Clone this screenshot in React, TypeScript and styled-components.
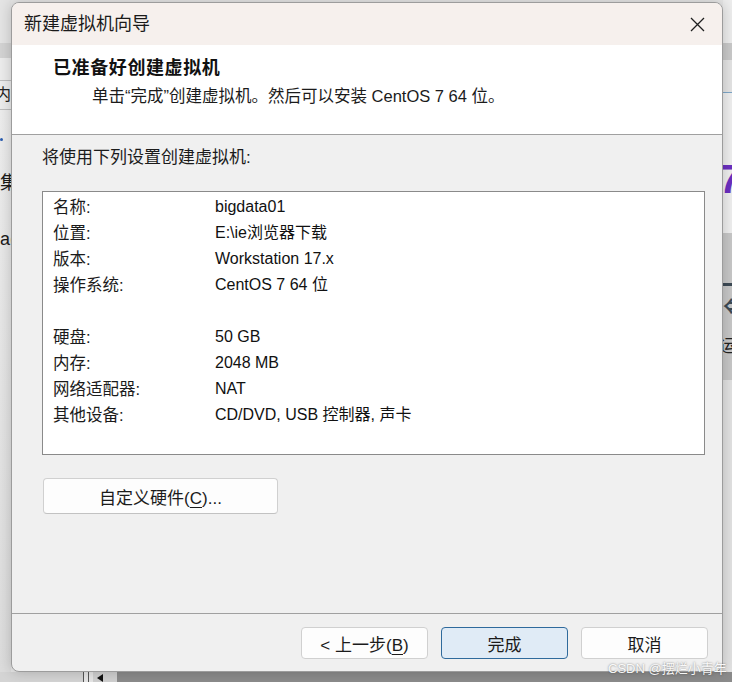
import React from "react";
import styled, { createGlobalStyle } from "styled-components";

const GlobalStyle = createGlobalStyle`
  html, body {
    margin: 0;
    padding: 0;
  }
  body {
    font-family: "Liberation Sans", "Noto Sans CJK SC", sans-serif;
    color: #1b1b1b;
    background: #e6e6e6;
  }
`;

interface SettingRow {
  label: string;
  value: string;
}

const settingsTop: SettingRow[] = [
  { label: "名称:", value: "bigdata01" },
  { label: "位置:", value: "E:\\ie浏览器下载" },
  { label: "版本:", value: "Workstation 17.x" },
  { label: "操作系统:", value: "CentOS 7 64 位" },
];

const settingsBottom: SettingRow[] = [
  { label: "硬盘:", value: "50 GB" },
  { label: "内存:", value: "2048 MB" },
  { label: "网络适配器:", value: "NAT" },
  { label: "其他设备:", value: "CD/DVD, USB 控制器, 声卡" },
];

const App = () => {
  return (
    <>
      <GlobalStyle />
      <Stage>
        <Backdrop>
          <Strip>
            <Band $h={43} $bg="#e4e4e4" />
            <Band $h={15} $bg="#d3d3d3" />
            <Band $h={22} $bg="#ececec" />
            <Cell>内容</Cell>
            <StripBody>
              <Dot />
              <StripText $top={30}>集</StripText>
              <StripText $top={32}>a(</StripText>
            </StripBody>
          </Strip>
          <div />
          <Strip>
            <Band $h={43} $bg="#ededed" />
            <Band $h={17} $bg="#c9c9c9" />
            <Band $h={33} $bg="#e4e4e4" $line="#7ea7c8" />
            <Band $h={140} $bg="#efefef">
              <Seven>7</Seven>
            </Band>
            <GreyPanel>
              <DarkRule />
              <Arrow>⇐</Arrow>
              <PanelText>运</PanelText>
            </GreyPanel>
            <StripBody $bg="#e2e2e2" />
          </Strip>
          <BottomBar>
            <BottomShadow />
            <ScrollLine />
            <ScrollLine />
            <LeftTriangle />
            <DarkFill />
          </BottomBar>
        </Backdrop>

        <Dialog>
          <TitleBar>
            <WindowTitle>新建虚拟机向导</WindowTitle>
            <CloseButton aria-label="关闭">
              <svg width="15" height="15" viewBox="0 0 15 15">
                <path
                  d="M1 1 L14 14 M14 1 L1 14"
                  stroke="#1f1f1f"
                  strokeWidth="1.3"
                  fill="none"
                />
              </svg>
            </CloseButton>
          </TitleBar>

          <Header>
            <Heading>已准备好创建虚拟机</Heading>
            <Subtitle>单击“完成”创建虚拟机。然后可以安装 CentOS 7 64 位。</Subtitle>
          </Header>

          <Body>
            <Intro>将使用下列设置创建虚拟机:</Intro>
            <SettingsBox>
              {settingsTop.map((row) => (
                <React.Fragment key={row.label}>
                  <Label>{row.label}</Label>
                  <Value>{row.value}</Value>
                </React.Fragment>
              ))}
              <Spacer />
              {settingsBottom.map((row) => (
                <React.Fragment key={row.label}>
                  <Label>{row.label}</Label>
                  <Value>{row.value}</Value>
                </React.Fragment>
              ))}
            </SettingsBox>
            <CustomButton>
              自定义硬件(<u>C</u>)...
            </CustomButton>
          </Body>

          <Footer>
            <Button>
              &lt; 上一步(<u>B</u>)
            </Button>
            <Button $primary>完成</Button>
            <Button>取消</Button>
          </Footer>
        </Dialog>

        <Watermark>CSDN @摆烂小青年</Watermark>
      </Stage>
    </>
  );
};

export default App;

const Stage = styled.div`
  position: relative;
  width: 732px;
  height: 682px;
  overflow: hidden;
`;

const Backdrop = styled.div`
  display: grid;
  grid-template-columns: 11px 1fr 9px;
  grid-template-rows: 672px 10px;
  height: 100%;
`;

const Strip = styled.div`
  display: flex;
  flex-direction: column;
  overflow: hidden;
  background: #ececec;
`;

const Band = styled.div<{ $h: number; $bg: string; $line?: string }>`
  flex: 0 0 ${(p) => p.$h}px;
  box-sizing: border-box;
  background: ${(p) => p.$bg};
  border-bottom: ${(p) => (p.$line ? `1px solid ${p.$line}` : "none")};
  position: relative;
  overflow: hidden;
`;

const Cell = styled.div`
  flex: 0 0 30px;
  box-sizing: border-box;
  border-top: 1px solid #bdbdbd;
  border-bottom: 1px solid #bdbdbd;
  background: #ececec;
  margin-left: -5px;
  font-size: 16px;
  line-height: 28px;
  white-space: nowrap;
  color: #222;
`;

const StripBody = styled.div<{ $bg?: string }>`
  flex: 1;
  display: flex;
  flex-direction: column;
  background: ${(p) => p.$bg ?? "linear-gradient(#ececec, #dcdcdc)"};
`;

const Dot = styled.div`
  width: 3px;
  height: 3px;
  margin-top: 28px;
  border-radius: 50%;
  background: #2a5db0;
`;

const StripText = styled.div<{ $top: number }>`
  margin-top: ${(p) => p.$top}px;
  font-size: 18px;
  line-height: 24px;
  white-space: nowrap;
  color: #1a1a1a;
`;

const Seven = styled.span`
  position: absolute;
  top: 66px;
  left: -4px;
  font-size: 40px;
  font-weight: bold;
  line-height: 40px;
  color: #6b2fc0;
`;

const GreyPanel = styled.div`
  flex: 0 0 147px;
  display: flex;
  flex-direction: column;
  background: #c7c7c7;
  overflow: hidden;
`;

const DarkRule = styled.div`
  height: 3px;
  margin-top: 50px;
  background: #3d4a55;
`;

const Arrow = styled.div`
  margin-top: 8px;
  font-size: 22px;
  font-weight: bold;
  line-height: 26px;
  color: #3d4a55;
`;

const PanelText = styled.div`
  margin-top: 16px;
  margin-left: -4px;
  font-size: 17px;
  line-height: 22px;
  color: #222;
`;

const BottomBar = styled.div`
  grid-column: 1 / -1;
  display: flex;
  align-items: stretch;
`;

const BottomShadow = styled.div`
  flex: 0 0 83px;
  background: #d4d4d4;
`;

const ScrollLine = styled.div`
  flex: 0 0 1px;
  margin-right: 4px;
  background: #555;
`;

const LeftTriangle = styled.div`
  flex: 0 0 24px;
  position: relative;
  background: #d0d0d0;

  &::before {
    content: "";
    position: absolute;
    left: 4px;
    top: 2px;
    border-top: 4px solid transparent;
    border-bottom: 4px solid transparent;
    border-right: 6px solid #111;
  }
`;

const DarkFill = styled.div`
  flex: 1;
  background: #8b8b8b;
`;

const Dialog = styled.section`
  position: absolute;
  left: 11px;
  top: 2px;
  width: 712px;
  height: 670px;
  box-sizing: border-box;
  display: flex;
  flex-direction: column;
  border: 1px solid #9c9c9c;
  border-radius: 8px;
  background: #f0f0f0;
  box-shadow: 0 0 14px rgba(0, 0, 0, 0.2);
  overflow: hidden;
`;

const TitleBar = styled.header`
  flex: 0 0 42px;
  box-sizing: border-box;
  display: flex;
  align-items: center;
  justify-content: space-between;
  padding-left: 12px;
  background: #f6f0ed;
`;

const WindowTitle = styled.h1`
  margin: 0;
  font-size: 18px;
  font-weight: normal;
  line-height: 24px;
  color: #1a1a1a;
`;

const CloseButton = styled.button`
  display: flex;
  align-items: center;
  justify-content: center;
  width: 46px;
  height: 42px;
  margin-right: 2px;
  padding: 0;
  border: none;
  background: transparent;
`;

const Header = styled.div`
  flex: 0 0 90px;
  box-sizing: border-box;
  padding: 11px 0 0 41px;
  background: #ffffff;
  border-bottom: 1px solid #a0a0a0;
`;

const Heading = styled.h2`
  margin: 0;
  font-size: 18px;
  font-weight: bold;
  letter-spacing: 0.6px;
  line-height: 24px;
  color: #111;
`;

const Subtitle = styled.p`
  margin: 4px 0 0 39px;
  font-size: 16.5px;
  line-height: 24px;
  color: #1b1b1b;
`;

const Body = styled.div`
  flex: 1;
  display: flex;
  flex-direction: column;
  align-items: flex-start;
  padding: 11px 0 0 30px;
`;

const Intro = styled.p`
  margin: 0;
  font-size: 17px;
  line-height: 24px;
`;

const SettingsBox = styled.div`
  display: grid;
  grid-template-columns: 162px 1fr;
  grid-auto-rows: 26px;
  align-content: start;
  box-sizing: border-box;
  width: 663px;
  height: 264px;
  margin-top: 21px;
  padding: 2px 0 0 10px;
  background: #ffffff;
  border: 1px solid #8a8a8a;
`;

const Label = styled.span`
  font-size: 16.5px;
  line-height: 26px;
  color: #1b1b1b;
`;

const Value = styled.span`
  font-size: 16px;
  line-height: 26px;
  color: #111;
`;

const Spacer = styled.div`
  grid-column: 1 / -1;
`;

const CustomButton = styled.button`
  width: 235px;
  height: 36px;
  margin: 23px 0 0 1px;
  padding: 0;
  font-family: inherit;
  font-size: 17px;
  color: #1b1b1b;
  background: #fdfdfd;
  border: 1px solid #d0d0d0;
  border-bottom-color: #c2c2c2;
  border-radius: 4px;

  u {
    text-underline-offset: 3px;
  }
`;

const Footer = styled.footer`
  flex: 0 0 58px;
  box-sizing: border-box;
  display: flex;
  justify-content: flex-end;
  align-items: flex-start;
  gap: 13px;
  padding: 13px 14px 0 0;
  border-top: 1px solid #a0a0a0;
`;

const Button = styled.button<{ $primary?: boolean }>`
  width: 127px;
  height: 32px;
  padding: 0;
  font-family: inherit;
  font-size: 17px;
  color: #1b1b1b;
  background: ${(p) => (p.$primary ? "#e0ebf6" : "#fdfdfd")};
  border: 1px solid ${(p) => (p.$primary ? "#2f6a9c" : "#d0d0d0")};
  border-radius: 4px;

  u {
    text-underline-offset: 3px;
  }
`;

const Watermark = styled.div`
  position: absolute;
  left: 608px;
  top: 660px;
  font-size: 13px;
  line-height: 18px;
  white-space: nowrap;
  color: rgba(255, 255, 255, 0.95);
  text-shadow: 0 0 2px rgba(60, 60, 60, 0.7);
`;
